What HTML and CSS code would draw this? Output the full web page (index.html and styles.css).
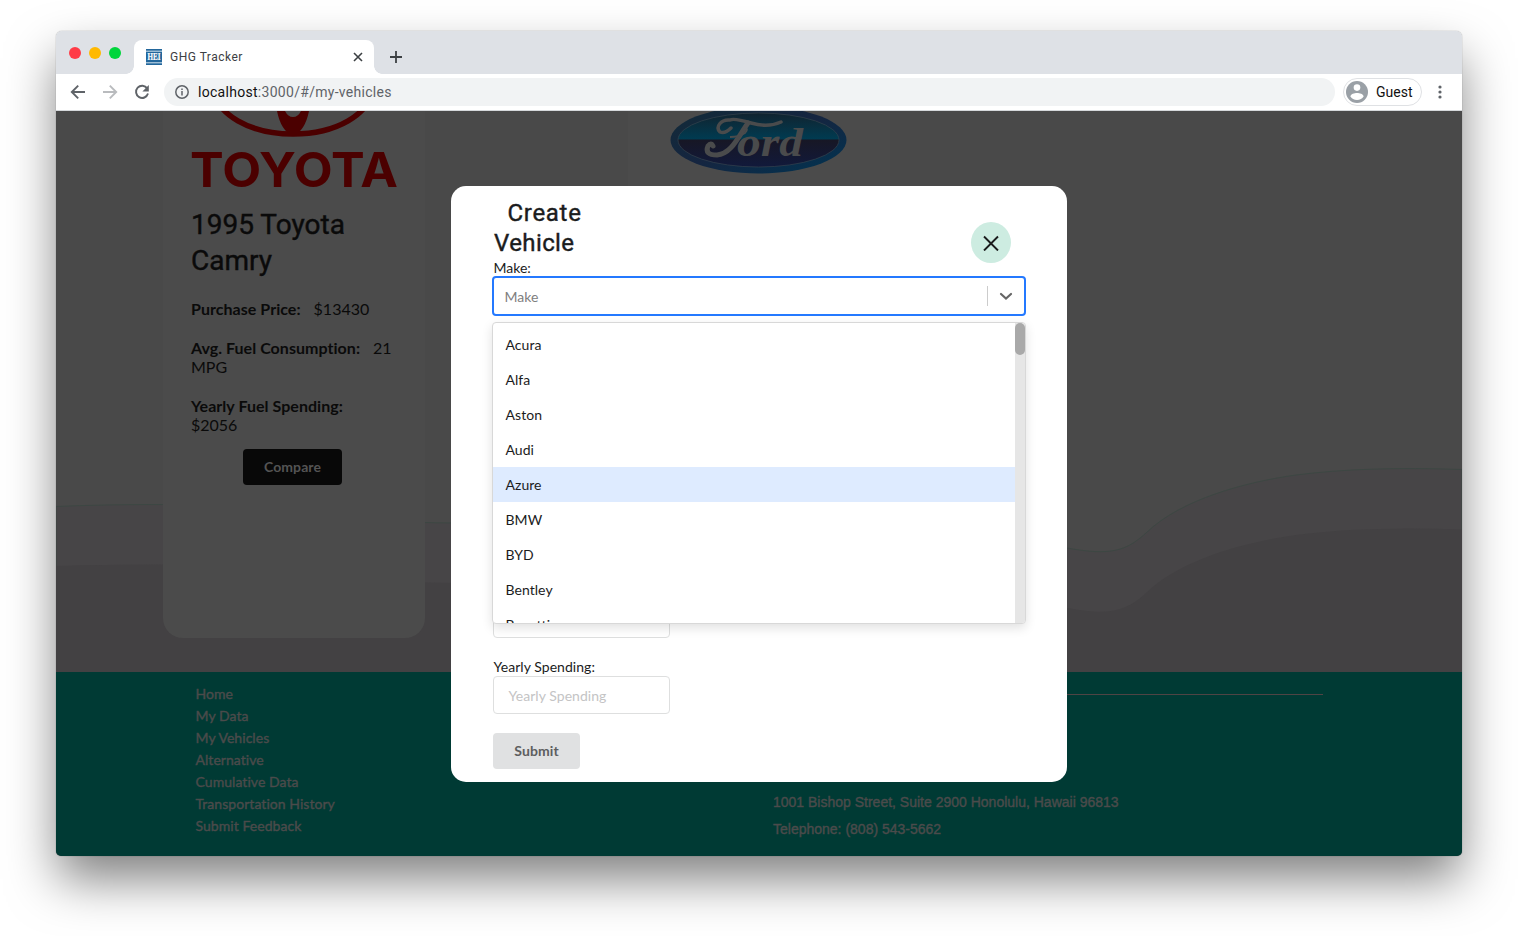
FILE: index.html
```html
<!DOCTYPE html>
<html lang="en">
<head>
<meta charset="utf-8">
<title>GHG Tracker</title>
<link rel="stylesheet" href="styles.css">
</head>
<body>
<div class="window">
  <div class="tabstrip">
    <div class="lights"><span class="light red"></span><span class="light yellow"></span><span class="light green"></span></div>
    <div class="tab">
      <svg class="favicon" width="16" height="16" viewBox="0 0 16 16"><rect width="16" height="16" fill="#23679c"/><path d="M0 2.2h16M0 13.8h16" stroke="#d4e4ef" stroke-width="1"/><text x="1.500" y="11.200" textLength="13" lengthAdjust="spacingAndGlyphs" class="favtext">HEI</text></svg>
      <span class="tabtitle">GHG Tracker</span>
      <svg class="tabclose" width="10" height="10" viewBox="0 0 10 10"><path d="M1 1l8 8M9 1L1 9" stroke="#3c4043" stroke-width="1.6"/></svg>
    </div>
    <svg class="newtab" width="12" height="12" viewBox="0 0 12 12"><path d="M6 0v12M0 6h12" stroke="#3c4043" stroke-width="1.8"/></svg>
  </div>
  <div class="toolbar">
    <svg width="16" height="16" viewBox="0 0 16 16" fill="none" stroke="#5f6368" stroke-width="1.9"><path d="M15 8H2M8.2 1.6L1.8 8l6.4 6.4"/></svg>
    <svg width="16" height="16" viewBox="0 0 16 16" fill="none" stroke="#b9bbbe" stroke-width="1.9"><path d="M1 8h13M7.8 1.6L14.2 8l-6.4 6.4"/></svg>
    <svg width="16" height="16" viewBox="0 0 16 16"><path d="M13.2 4.4A6.1 6.1 0 1 0 14 9.6" fill="none" stroke="#5f6368" stroke-width="1.9"/><path d="M14.8 1v6.4H8.4z" fill="#5f6368"/></svg>
    <div class="address">
      <svg width="14" height="14" viewBox="0 0 14 14"><circle cx="7" cy="7" r="6.2" fill="none" stroke="#5f6368" stroke-width="1.5"/><path d="M7 6.1v4.4M7 3.4v1.5" stroke="#5f6368" stroke-width="1.5"/></svg>
      <span class="url"><span class="host">localhost</span>:3000/#/my-vehicles</span>
    </div>
    <div class="profile">
      <svg width="22" height="22" viewBox="0 0 22 22"><circle cx="11" cy="11" r="11" fill="#9aa0a6"/><circle cx="11" cy="6.6" r="3.3" fill="#fff"/><path d="M4.4 15.4c0-2.4 4.2-3.5 6.6-3.5s6.6 1.1 6.6 3.5c-1.4 2.1-3.7 3.5-6.6 3.5s-5.2-1.4-6.600-3.500z" fill="#fff"/></svg>
      <span>Guest</span>
    </div>
    <svg class="more" width="4" height="14" viewBox="0 0 4 14" fill="#5f6368"><circle cx="2" cy="2" r="1.6"/><circle cx="2" cy="7" r="1.6"/><circle cx="2" cy="12" r="1.6"/></svg>
  </div>
  <div class="page">
    <main class="main">
      <svg class="waves" width="1406" height="561" viewBox="0 0 1406 561">
        <path d="M0 395.500Q45 393.500 107 393.500C200 394 290 412 400 412H900L1011 437C1055 445 1070 440 1090 422C1125 388 1190 371 1240 364Q1310 355 1406 358.500V561H0z" fill="#474547" stroke="#3d4743" stroke-width="1"/>
        <path d="M0 455Q45 453.500 107 453.500C200 454 290 472 400 472H900L1011 497C1055 505 1070 500 1090 482C1125 448 1190 431 1240 424Q1310 415 1406 418.500V561H0z" fill="#434143"/>
      </svg>
      <article class="card">
        <svg class="toyota" width="206" height="78" viewBox="0 0 206 78">
          <ellipse cx="102" cy="-22" rx="78" ry="45" fill="none" stroke="#4b0000" stroke-width="5.500"/>
          <path d="M86 0Q90 20 102 25Q114 20 118 0H110Q107 6 102 6T94 0z" fill="#4b0000"/>
          <text x="-1" y="75.500" textLength="208" lengthAdjust="spacingAndGlyphs" class="toyotatext">TOYOTA</text>
        </svg>
        <h2 class="cardtitle">1995 Toyota<br>Camry</h2>
        <p class="fact"><b>Purchase Price:</b><span class="val">$13430</span></p>
        <p class="fact"><b>Avg. Fuel Consumption:</b><span class="val">21</span><br>MPG</p>
        <p class="fact"><b>Yearly Fuel Spending:</b><br>$2056</p>
        <button class="compare">Compare</button>
      </article>
      <article class="card">
        <svg class="ford" width="178" height="64" viewBox="0 0 178 64">
          <defs>
            <linearGradient id="rim" x2="1" y2="1"><stop offset="0" stop-color="#122b38"/><stop offset=".5" stop-color="#152540"/><stop offset="1" stop-color="#003452"/></linearGradient>
            <linearGradient id="face" x2="0" y2="1"><stop offset="0" stop-color="#11232f"/><stop offset=".48" stop-color="#003b51"/><stop offset=".5" stop-color="#171725"/><stop offset="1" stop-color="#11193b"/></linearGradient>
          </defs>
          <ellipse cx="88.500" cy="29" rx="88" ry="33.500" fill="url(#rim)"/>
          <ellipse cx="88.500" cy="29" rx="80.500" ry="27" fill="url(#face)" stroke="#3b4850" stroke-width=".6"/>
          <path d="M111 11Q98 17 81 12T60 9C51 8 45 16 50 21Q55 23 61 17" fill="none" stroke="#4a4b4c" stroke-width="3.500" stroke-linecap="round"/>
          <path d="M78 12C69 24 62 43 47 44Q34 44 38 35Q41 31 43 35" fill="none" stroke="#4a4b4c" stroke-width="5" stroke-linecap="round"/>
          <path d="M60 26Q69 26 75 22Q79 17 75 18T73 24" fill="none" stroke="#4a4b4c" stroke-width="1.800"/>
          <text x="67" y="45" textLength="66" lengthAdjust="spacingAndGlyphs" class="fordtext">ord</text>
        </svg>
      </article>
    </main>
    <footer class="footer">
      <nav class="links"><a>Home</a><a>My Data</a><a>My Vehicles</a><a>Alternative</a><a>Cumulative Data</a><a>Transportation History</a><a>Submit Feedback</a></nav>
      <div class="contact">
        <div class="rule"></div>
        <p>1001 Bishop Street, Suite 2900 Honolulu, Hawaii 96813</p>
        <p class="phone">Telephone: (808) 543-5662</p>
      </div>
    </footer>
    <section class="modal">
      <header class="modalhead">
        <h1 class="modaltitle"><span class="first">Create</span><br><span class="second">Vehicle</span></h1>
        <button class="close"><svg width="16" height="16" viewBox="0 0 16 16"><path d="M1 1.500l14 14M15 1.500L1 15.500" stroke="#1b1c1d" stroke-width="1.900"/></svg></button>
      </header>
      <div class="label">Make:</div>
      <div class="select"><span class="placeholder">Make</span><span class="divider"></span><svg width="14" height="8" viewBox="0 0 14 8"><path d="M2 2l5 4.500L12 2" fill="none" stroke="#666" stroke-width="2.200" stroke-linecap="round"/></svg></div>
      <div class="menu">
        <div class="options"><div class="option">Acura</div><div class="option">Alfa</div><div class="option">Aston</div><div class="option">Audi</div><div class="option focused">Azure</div><div class="option">BMW</div><div class="option">BYD</div><div class="option">Bentley</div><div class="option">Bugatti</div></div>
        <div class="track"><div class="thumb"></div></div>
      </div>
      <div class="lower">
        <div class="input"></div>
        <div class="label spending">Yearly Spending:</div>
        <div class="input">Yearly Spending</div>
        <button class="submit">Submit</button>
      </div>
    </section>
  </div>
</div>
</body>
</html>
```
FILE: styles.css
```css
* { box-sizing: border-box; }
body { margin: 0; width: 1518px; height: 936px; padding: 31px 56px; background: #fff; overflow: hidden; font-family: Lato, sans-serif; font-variant-ligatures: none; }
h1, h2, p { margin: 0; font-weight: normal; }
button { border: 0; padding: 0; font-family: Lato, sans-serif; }
svg { flex: none; }

/* browser frame */
.window { width: 1406px; height: 825px; border-radius: 6px 6px 5px 5px; box-shadow: 0 0 1px rgba(0,0,0,.55), 0 25px 50px -2px rgba(0,0,0,.5); }
.tabstrip { height: 43px; display: flex; align-items: center; background: #dee1e6; border-radius: 6px 6px 0 0; }
.lights { width: 78px; padding: 0 0 0 13px; display: flex; gap: 8px; }
.light { width: 12px; height: 12px; border-radius: 50%; }
.red { background: #ff3b47; }
.yellow { background: #ffb900; }
.green { background: #00d53c; }
.tab { position: relative; width: 240px; height: 34px; margin-top: 9px; padding: 0 11px 0 12px; display: flex; align-items: center; background: #fff; border-radius: 8px 8px 0 0; }
.tab::before, .tab::after { content: ""; position: absolute; bottom: 0; width: 8px; height: 8px; }
.tab::before { left: -8px; background: radial-gradient(circle at 0 0, transparent 7.5px, #fff 8px); }
.tab::after { right: -8px; background: radial-gradient(circle at 100% 0, transparent 7.5px, #fff 8px); }
.favicon { overflow: visible; }
.favtext { font: bold 9.5px "Liberation Serif", serif; fill: #fff; stroke: #fff; stroke-width: .2px; }
.tabtitle { margin-left: 8px; flex: 1; font: 12px Roboto, sans-serif; letter-spacing: .5px; color: #3c4043; }
.newtab { margin: 8px 0 0 16px; }
.toolbar { height: 37px; padding: 0 20px 0 14px; display: flex; align-items: center; gap: 16px; background: #fff; border-bottom: 1px solid #d5d8db; }
.address { margin-left: -2px; flex: 1; height: 28px; padding-left: 11px; display: flex; align-items: center; gap: 9px; background: #f1f3f4; border-radius: 14px; }
.url { font: 14px Roboto, sans-serif; letter-spacing: .29px; color: #5f6368; }
.host { color: #111; }
.profile { width: 79px; height: 28px; margin-left: -8px; padding-left: 2px; display: flex; align-items: center; gap: 8px; border: 1px solid #dfe1e4; border-radius: 14px; font: 14px Roboto, sans-serif; color: #111; }

/* dimmed page */
.page { position: relative; height: 745px; border-radius: 0 0 5px 5px; overflow: hidden; background: #494949; }
.main { position: relative; height: 561px; padding-left: 107px; display: flex; align-items: flex-start; gap: 203px; overflow: hidden; }
.waves { position: absolute; left: 0; top: 0; }
.card { position: relative; width: 262px; height: 527px; padding: 0 28px; background: #4b4b4b; border-radius: 0 0 20px 20px; }
.toyota, .ford { display: block; overflow: visible; }
.toyotatext { font: bold 48px Inter, sans-serif; fill: #4b0000; }
.ford { margin-left: 14px; }
.fordtext { font: italic bold 40px "Liberation Serif", serif; fill: #4a4b4c; }
.cardtitle { margin: 18px 0 20px; font: 28px/36px Roboto, sans-serif; color: #0a0a0a; -webkit-text-stroke: .4px #0a0a0a; }
.fact { margin-bottom: 20px; font-size: 16px; line-height: 19px; color: #0a0a0a; white-space: nowrap; }
.fact b { letter-spacing: .04px; }
.val { margin-left: 13px; }
.compare { display: block; width: 99px; height: 36px; margin: -5px auto 0 52px; padding-bottom: 2px; border-radius: 4px; background: #080808; color: #545454; font-size: 14px; font-weight: bold; letter-spacing: .1px; }
.footer { height: 184px; display: flex; background: #003a34; color: #4b4b4b; }
.links { width: 577px; padding: 11px 0 0 139.500px; display: flex; flex-direction: column; font-size: 14px; line-height: 22px; letter-spacing: .05px; -webkit-text-stroke: .4px #4b4b4b; }
.contact { margin-left: 140px; font: 14px/27px "Liberation Sans", sans-serif; -webkit-text-stroke: .4px #4b4b4b; }
.rule { width: 550px; height: 1px; margin: 22px 0 94px; background: #4f4444; }

/* modal */
.modal { position: absolute; left: 395px; top: 75px; width: 616px; height: 596px; padding: 12px 41px 0; background: #fff; border-radius: 15px; color: #1b1c1d; font-size: 14px; }
.modalhead { height: 62px; display: flex; justify-content: space-between; }
.modaltitle { padding-left: 2px; font: 24px/30px Roboto, sans-serif; letter-spacing: .4px; -webkit-text-stroke: .4px #1b1c1d; }
.first { margin-left: 13.5px; letter-spacing: .7px; }
.close { width: 40px; height: 41px; margin: 24px 15px 0 0; border-radius: 50%; background: #cdece1; display: flex; align-items: center; justify-content: center; }
.label { height: 16px; padding-left: 1.5px; line-height: 15px; }
.select { height: 40px; padding: 0 11px 0 10.5px; display: flex; align-items: center; border: 2px solid #2479ff; border-radius: 4px; }
.placeholder { flex: 1; padding-top: 1px; color: #808080; }
.divider { width: 1px; height: 20px; margin-right: 11px; background: #ccc; }
.menu { position: relative; z-index: 1; height: 302px; margin-top: 6px; display: flex; background: #fff; border: 1px solid #d8d8d8; border-radius: 4px; box-shadow: 0 4px 11px rgba(0,0,0,.12); overflow: hidden; }
.options { flex: 1; padding-top: 4px; }
.option { height: 35px; padding-left: 12.5px; line-height: 36px; letter-spacing: .05px; }
.focused { background: #deebff; }
.track { width: 10px; background: #e6e6e6; }
.thumb { height: 32px; border-radius: 5px; background: #a9a9a9; }
.lower { margin-top: -24px; padding-left: 1px; }
.input { width: 177px; height: 38px; padding-left: 14.5px; border: 1px solid #dedfdf; border-radius: 4px; line-height: 38px; color: #c4c4c5; letter-spacing: .05px; }
.spending { margin-top: 22px; padding-left: .5px; line-height: 13px; letter-spacing: .05px; }
.submit { display: block; width: 87px; height: 36px; margin-top: 19px; padding-bottom: 2px; border-radius: 4px; background: #e0e1e2; color: #5d5e5f; font-size: 14px; font-weight: bold; letter-spacing: .1px; }
```
